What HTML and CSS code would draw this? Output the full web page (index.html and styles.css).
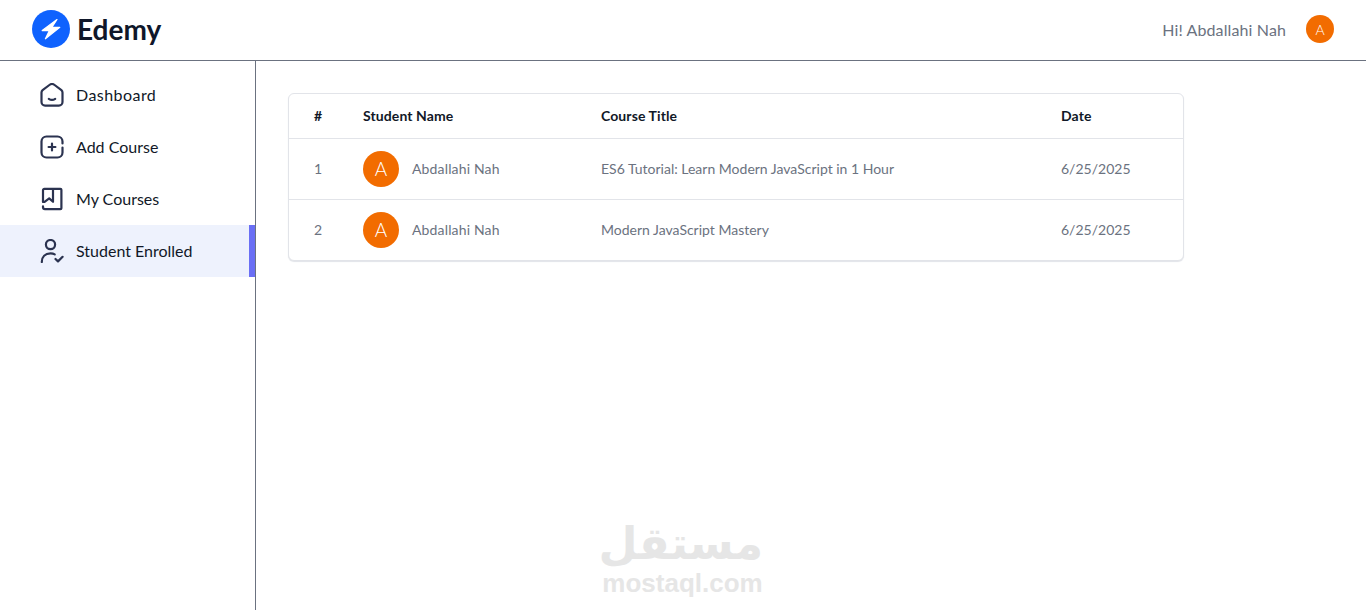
FILE: index.html
```html
<!DOCTYPE html>
<html lang="en">
<head>
<meta charset="utf-8">
<title>Edemy</title>
<link rel="stylesheet" href="styles.css">
</head>
<body>
<header class="topbar">
  <div class="brand">
    <svg class="brand-mark" viewBox="0 0 38 38"><circle cx="19" cy="19" r="19" fill="#0f62fe"/><path d="M25 9.5 10.2 20.6h7.2L13.4 28.8 27.8 17.4h-8z" fill="#fff" stroke="#fff" stroke-width="1.2" stroke-linejoin="round"/></svg>
    <span class="brand-name">Edemy</span>
  </div>
  <div class="user">
    <span class="user-name">Hi! Abdallahi Nah</span>
    <span class="avatar avatar-sm">A</span>
  </div>
</header>
<div class="shell">
  <nav class="sidebar">
    <a class="nav-item">
      <svg class="nav-icon" viewBox="0 0 24 24"><path d="M1.5 9.6c0-1 .4-1.8 1.1-2.4l6.8-5.2a4.2 4.2 0 0 1 5.2 0l6.8 5.2c.7.6 1.1 1.4 1.1 2.4v9.4a3.6 3.6 0 0 1-3.6 3.6H5.1A3.6 3.6 0 0 1 1.5 19z"/><path d="M8.8 15.8c1.8 1.3 4.6 1.3 6.4 0"/></svg>
      <span class="nav-label nav-label-wide">Dashboard</span>
    </a>
    <a class="nav-item">
      <svg class="nav-icon" viewBox="0 0 24 24"><path d="M22.5 8.5v-2a5 5 0 0 0-5-5h-11a5 5 0 0 0-5 5v11a5 5 0 0 0 5 5h11a5 5 0 0 0 5-5v-5"/><path d="M12 8.6v6.8M8.6 12h6.8"/></svg>
      <span class="nav-label">Add Course</span>
    </a>
    <a class="nav-item">
      <svg class="nav-icon" viewBox="0 0 24 24"><path d="M3 14.8V3.2c0-.8.6-1.4 1.4-1.4h16c.6 0 1 .4 1 1v18.4c0 .6-.4 1-1 1H5c-1.1 0-2-.8-2-1.9v-1"/><path d="M3 14.8h1.6l4.6-3.4 3.8 3.4V2"/></svg>
      <span class="nav-label">My Courses</span>
    </a>
    <a class="nav-item nav-item-active">
      <svg class="nav-icon" viewBox="0 0 24 24"><circle cx="10.5" cy="5.6" r="4.6"/><path d="M1.8 23c0-5.4 3.4-8.6 8.7-8.6 1.6 0 3 .3 4.2 1"/><path d="m15.5 20 2.5 2.4 4.6-4.6"/></svg>
      <span class="nav-label">Student Enrolled</span>
    </a>
  </nav>
  <main class="content">
    <div class="card">
      <table class="table">
        <thead>
          <tr><th class="col-num">#</th><th class="col-name">Student Name</th><th class="col-course">Course Title</th><th>Date</th></tr>
        </thead>
        <tbody>
          <tr>
            <td class="col-num">1</td>
            <td><div class="student"><span class="avatar avatar-md">A</span><span class="student-name">Abdallahi Nah</span></div></td>
            <td>ES6 Tutorial: Learn Modern JavaScript in 1 Hour</td>
            <td>6/25/2025</td>
          </tr>
          <tr>
            <td class="col-num">2</td>
            <td><div class="student"><span class="avatar avatar-md">A</span><span class="student-name">Abdallahi Nah</span></div></td>
            <td>Modern JavaScript Mastery</td>
            <td>6/25/2025</td>
          </tr>
        </tbody>
      </table>
    </div>
  </main>
</div>
<div class="watermark">
  <div class="wm-ar" dir="rtl" lang="ar">مستقل</div>
  <div class="wm-en">mostaql.com</div>
</div>
</body>
</html>
```
FILE: styles.css
```css
* { box-sizing: border-box; }
html, body { height: 100%; }
body {
  margin: 0;
  background: #fff;
  font-family: "Lato", "Open Sans", sans-serif;
  color: #6b7280;
  overflow: hidden;
  display: flex;
  flex-direction: column;
}
.topbar {
  height: 61px;
  flex: none;
  display: flex;
  align-items: center;
  justify-content: space-between;
  padding: 0 32px 2px;
  border-bottom: 1px solid #6b7280;
}
.brand { display: flex; align-items: center; gap: 7px; }
.brand-mark { width: 38px; height: 38px; display: block; }
.brand-name { font-size: 28px; font-weight: 700; color: #0f172a; }
.user { display: flex; align-items: center; gap: 20px; font-size: 16px; }
.user-name { letter-spacing: 0.12px; }
.avatar {
  display: flex;
  align-items: center;
  justify-content: center;
  border-radius: 50%;
  background: #f26c00;
  color: #fff;
  flex: none;
  font-weight: 300;
}
.avatar-sm { width: 28px; height: 28px; font-size: 14px; }
.avatar-md { width: 36px; height: 36px; font-size: 19px; }
.shell { flex: 1; display: flex; min-height: 0; }
.sidebar {
  width: 256px;
  flex: none;
  padding-top: 8px;
  border-right: 1px solid #6b7280;
}
.nav-item {
  height: 52px;
  display: flex;
  align-items: center;
  gap: 12px;
  padding-left: 40px;
  font-size: 16px;
  color: #111827;
}
.nav-label { padding-bottom: 2px; }
.nav-label-wide { letter-spacing: 0.45px; }
.nav-item-active { background: #eef2fd; border-right: 6px solid #6a6ff5; }
.nav-icon {
  width: 24px;
  height: 24px;
  fill: none;
  stroke: #2b3350;
  stroke-width: 2.2;
  stroke-linecap: round;
  stroke-linejoin: round;
  flex: none;
}
.content { flex: 1; padding: 32px; min-width: 0; }
.card {
  width: 896px;
  border: 1px solid #e2e4e9;
  border-radius: 6px;
  box-shadow: 0 1px 1px #e2e4e9;
  overflow: hidden;
  background: #fff;
}
.table { width: 100%; border-collapse: collapse; table-layout: fixed; font-size: 14px; }
.table th {
  height: 44px;
  padding: 0 16px;
  text-align: left;
  font-weight: 700;
  color: #111827;
  border-bottom: 1px solid #e2e4e9;
  letter-spacing: 0.1px;
}
.table td { height: 61px; padding: 0 16px; }
.table tbody tr + tr td { border-top: 1px solid #e2e4e9; }
.table .col-num { width: 58px; text-align: center; }
.col-name { width: 238px; }
.col-course { width: 460px; }
.student { display: flex; align-items: center; gap: 13px; }
.student-name { letter-spacing: 0.15px; }
.watermark {
  position: absolute;
  left: 602px;
  top: 518px;
  width: 161px;
  text-align: center;
  color: #e6e6e6;
  font-family: "Liberation Sans", sans-serif;
  font-weight: 700;
}
.wm-ar { font-family: "DejaVu Sans", sans-serif; font-size: 45px; line-height: 52px; height: 52px; white-space: nowrap; }
.wm-en { font-size: 26px; line-height: 26px; }
```
